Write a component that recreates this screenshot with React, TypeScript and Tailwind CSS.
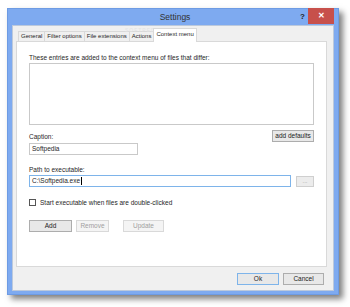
const tabs = ['General', 'Filter options', 'File extensions', 'Actions']

function Btn({ label, w, disabled }: { label: string; w: string; disabled?: boolean }) {
  return (
    <div
      className={`${w} h-[12px] flex items-center justify-center border text-[6.5px] ${
        disabled ? 'border-[#d9d9d9] bg-[#f4f4f4] text-[#a0a0a0]' : 'border-[#adadad] bg-[#e8e8e8] text-[#222]'
      }`}
    >
      {label}
    </div>
  )
}

export default function App() {
  return (
    <div className="w-[350px] h-[307px] bg-white overflow-hidden" style={{ fontFamily: '"Liberation Sans", Arial, sans-serif' }}>
      <div className="ml-[7px] mt-[8px] w-[332px] h-[287px] bg-[#7eaaf0] border border-[#6d9be3] shadow-[4px_4px_6px_rgba(0,0,0,0.5)] flex flex-col">
        {/* Title bar */}
        <div className="h-[16px] flex items-center relative">
          <div className="flex-1 text-center text-[8.5px] text-[#333] pl-[4px]">Settings</div>
          <span className="absolute right-[33px] top-[2px] text-[8px] font-bold text-[#1e1e1e]">?</span>
          <div className="absolute right-[4px] top-[-1px] w-[26px] h-[16px] bg-[#c7504b] flex items-center justify-center text-white text-[8px] font-bold">
            ✕
          </div>
        </div>

        {/* Client area */}
        <div className="flex-1 mx-[4px] mb-[3px] bg-[#f0f0f0] border border-[#bcc9dc] flex flex-col text-[#1e1e1e]">
          {/* Tabs */}
          <div className="flex items-end pl-[5px] pt-[2px] h-[15px] relative">
            {tabs.map(t => (
              <div key={t} className="h-[10px] px-[2px] border border-b-0 border-[#d9d9d9] bg-[#f0f0f0] text-[6px] leading-[9px] -mr-px">
                {t}
              </div>
            ))}
            <div className="h-[14px] px-[2px] border border-b-0 border-[#d9d9d9] bg-white text-[6px] leading-[11px] relative z-10 mb-[-1px]">
              Context menu
            </div>
            <span className="absolute left-[112px] top-[1px] text-[5px] tracking-[1px] text-[#e2e2e2]">SOFTPEDIA</span>
          </div>

          {/* Panel */}
          <div className="ml-[3px] mr-[6px] h-[226px] bg-white border border-[#d9d9d9] px-[12px] pt-[11px] text-[6.5px]">
            <div className="leading-[9px]">These entries are added to the context menu of files that differ:</div>
            <div className="mt-[1px] h-[62px] border border-[#c9c9c9]" />

            <div className="flex justify-between items-start mt-[5px]">
              <div className="flex flex-col">
                <div className="mt-[2px] leading-[9px]">Caption:</div>
                <div className="mt-[2px] w-[109px] h-[12px] border border-[#c9c9c9] flex items-center px-[2px]">Softpedia</div>
              </div>
              <Btn label="add defaults" w="w-[42px]" />
            </div>

            <div className="mt-[10px] leading-[9px]">Path to executable:</div>
            <div className="mt-[1px] flex items-center justify-between">
              <div className="w-[262px] h-[12px] border border-[#7eb4ea] flex items-center px-[2px]">
                C:\Softpedia.exe<span className="w-px h-[8px] bg-black ml-px" />
              </div>
              <div className="w-[18px] h-[11px] border border-[#cfcfcf] bg-[#ececec] flex items-center justify-center text-[6px] text-[#999] leading-none">
                ...
              </div>
            </div>

            <div className="mt-[11px] flex items-center">
              <div className="w-[7px] h-[7px] border border-[#555] bg-white" />
              <span className="ml-[4px] leading-[9px]">Start executable when files are double-clicked</span>
            </div>

            <div className="mt-[13px] flex gap-[4px]">
              <Btn label="Add" w="w-[43px]" />
              <Btn label="Remove" w="w-[33px]" disabled />
              <div className="ml-[10px]">
                <Btn label="Update" w="w-[41px]" disabled />
              </div>
            </div>
          </div>

          {/* Dialog buttons */}
          <div className="flex justify-end gap-[4px] pr-[9px] mt-[6px]">
            <div className="w-[42px] h-[12px] border border-[#7eb4ea] bg-[#e8e8e8] flex items-center justify-center text-[6.5px]">Ok</div>
            <Btn label="Cancel" w="w-[41px]" />
          </div>
        </div>
      </div>
    </div>
  )
}
